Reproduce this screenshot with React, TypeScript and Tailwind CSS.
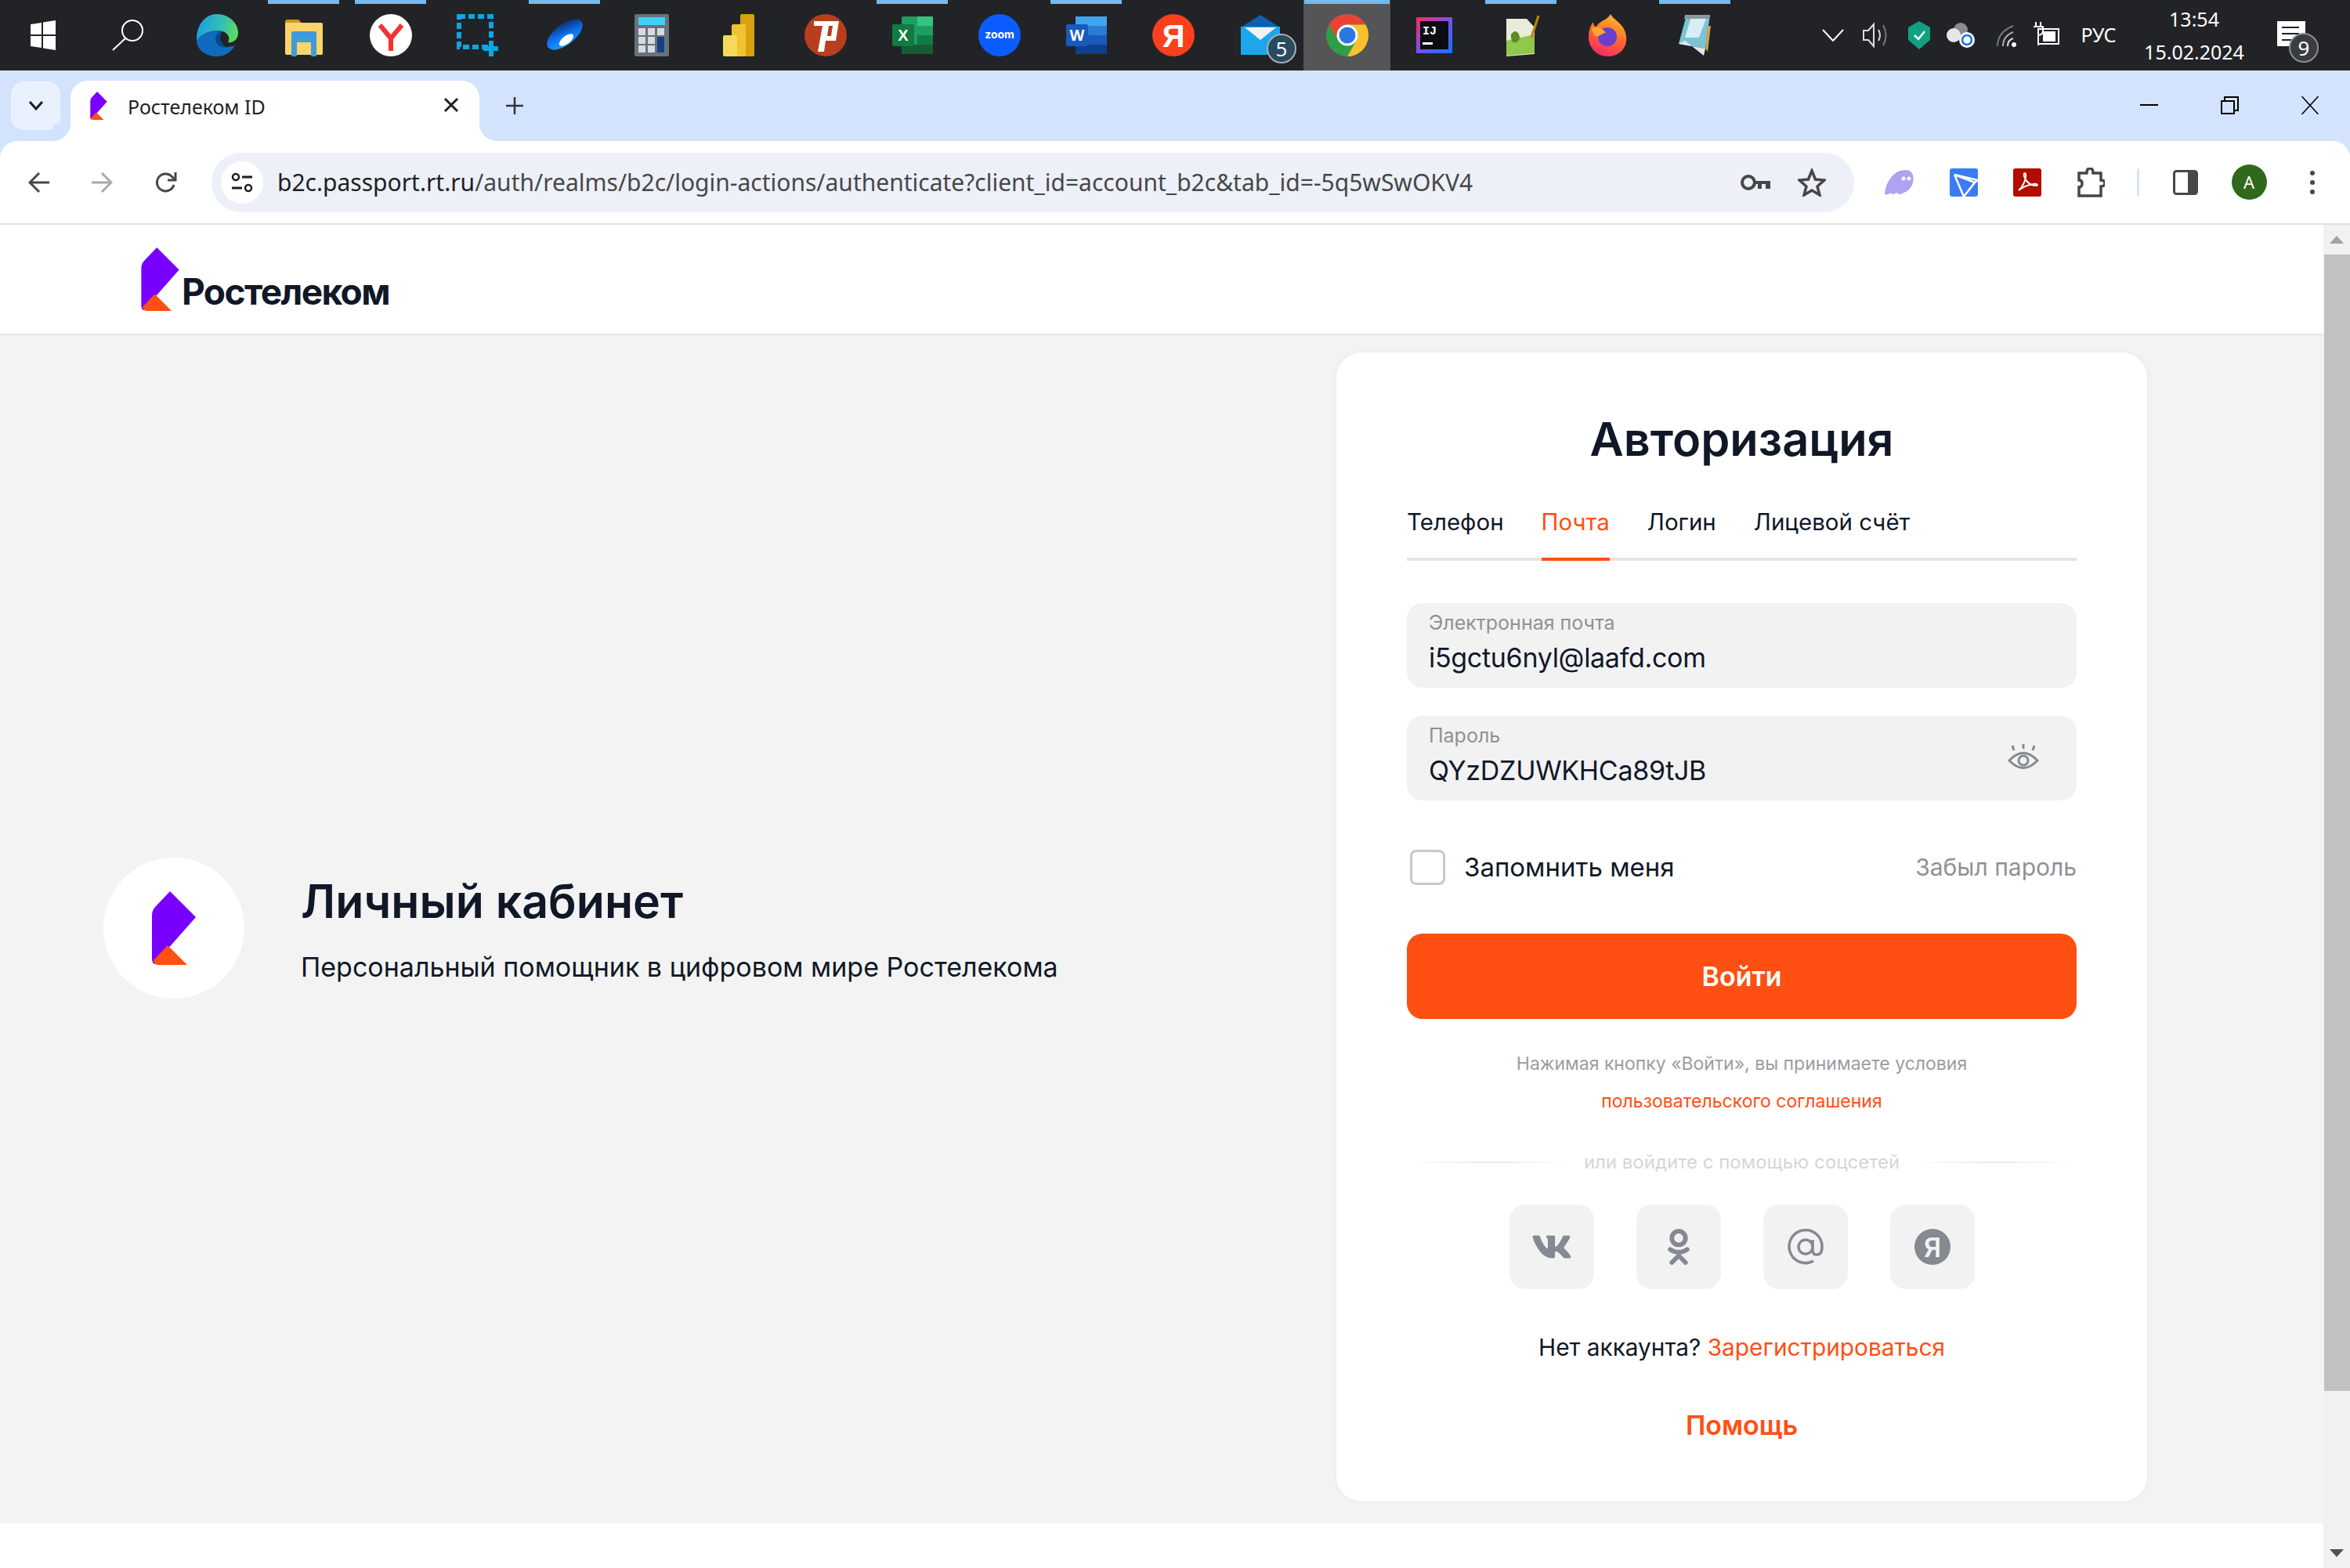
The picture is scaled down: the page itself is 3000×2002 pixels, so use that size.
import React from 'react';
import { FaVk, FaOdnoklassniki } from 'react-icons/fa';

const iconCls = 'w-[54px] h-[54px]';

function Logo({ className }: { className: string }) {
  return (
    <svg viewBox="0 0 56 94" className={className}>
      <path d="M23 0 L56 33 L3 93 Q0 91 0 86 V31 Q0 24 5 19 Z" fill="#7800ff" />
      <path d="M20 69 L45 94 H8 Q3 94 2 88 Z" fill="#ff4f12" />
    </svg>
  );
}

const Edge = () => (
  <svg viewBox="0 0 54 54" className={iconCls}>
    <defs>
      <linearGradient id="edgeA" x1="0" y1="0.4" x2="1" y2="0.6">
        <stop offset="0" stopColor="#1b9de2" />
        <stop offset="0.6" stopColor="#35c1b0" />
        <stop offset="1" stopColor="#62dc5a" />
      </linearGradient>
    </defs>
    <path d="M27 0 C43 0 54 12 54 24 C54 33 47 37 41 36 C44 32 42 24 34 22 C22 19 8 24 1 34 C0 14 12 0 27 0Z" fill="url(#edgeA)" />
    <path d="M1 34 C8 24 22 19 34 22 C28 22 24 28 26 35 C28 42 38 44 50 40 C44 50 36 54 27 54 C12 54 2 46 1 34Z" fill="#0f6cbd" />
    <path d="M34 22 C28 22 24 28 26 35 C27 40 33 43 40 43 C32 38 28 30 34 22Z" fill="#0a4a8c" />
  </svg>
);

const Explorer = () => (
  <svg viewBox="0 0 54 54" className={iconCls}>
    <path d="M3 10 Q3 7 6 7 H20 L25 12 V20 H3Z" fill="#d19b10" />
    <rect x="3" y="11" width="48" height="41" rx="2" fill="#fbd569" />
    <path d="M11 54 V24 Q11 22 13 22 H41 Q43 22 43 24 V54 H36 V36 H18 V54Z" fill="#3f9bdc" />
  </svg>
);

const YandexBrowser = () => (
  <svg viewBox="0 0 54 54" className={iconCls}>
    <circle cx="27" cy="27" r="27" fill="#fff" />
    <path d="M13 14 L27 31 L41 14 M27 31 V47" stroke="#f83030" strokeWidth="6" fill="none" />
  </svg>
);

const Snip = () => (
  <svg viewBox="0 0 54 54" className={iconCls}>
    <rect x="3" y="3" width="41" height="39" fill="none" stroke="#0ea5e9" strokeWidth="6" strokeDasharray="8 4" />
    <path d="M34 44 H53 M44 35 V54" stroke="#0ea5e9" strokeWidth="6" />
  </svg>
);

const Swoosh = () => (
  <svg viewBox="0 0 54 54" className={iconCls}>
    <defs>
      <linearGradient id="swooshA" x1="0.8" y1="0" x2="0.2" y2="1">
        <stop offset="0" stopColor="#0a2a66" />
        <stop offset="0.5" stopColor="#0d6ff0" />
        <stop offset="1" stopColor="#19a0ff" />
      </linearGradient>
    </defs>
    <ellipse cx="27" cy="26" rx="27" ry="13" fill="url(#swooshA)" transform="rotate(-38 27 26)" />
    <ellipse cx="29" cy="33" rx="11" ry="5" fill="#fff" transform="rotate(-38 29 33)" />
  </svg>
);

const Calc = () => (
  <svg viewBox="0 0 54 54" className={iconCls}>
    <rect x="5" y="0" width="44" height="54" rx="2" fill="#68727c" />
    <rect x="10" y="4" width="34" height="10" fill="#3fd0f5" />
    {[18, 29, 40].map(y =>
      [10, 22].map(x => <rect key={`${x}-${y}`} x={x} y={y} width="9" height="9" fill="#d5dbe0" />),
    )}
    <rect x="34" y="18" width="9" height="9" fill="#d5dbe0" />
    <rect x="34" y="29" width="9" height="20" fill="#16417f" />
  </svg>
);

const PowerBi = () => (
  <svg viewBox="0 0 54 54" className={iconCls}>
    <rect x="29" y="0" width="18" height="54" rx="2" fill="#d8a20f" />
    <rect x="18" y="13" width="18" height="41" rx="2" fill="#f2c230" />
    <rect x="7" y="27" width="18" height="27" rx="2" fill="#f5d95d" />
  </svg>
);

const Psiphon = () => (
  <svg viewBox="0 0 54 54" className={iconCls}>
    <circle cx="27" cy="27" r="27" fill="#b83e1f" />
    <path fillRule="evenodd" d="M12 9 H44 L40 34 H27 L25 48 H17 L23 15 H12Z M31 15 L29 28 H34 L36 15Z" fill="#fff" />
  </svg>
);

const Excel = () => (
  <svg viewBox="0 0 54 54" className={iconCls}>
    <rect x="13" y="3" width="40" height="48" rx="2" fill="#1f9e62" />
    <rect x="33" y="3" width="20" height="12" fill="#33c481" />
    <rect x="33" y="27" width="20" height="12" fill="#107c41" />
    <rect x="13" y="39" width="40" height="12" fill="#185c37" />
    <rect x="1" y="13" width="28" height="28" rx="2" fill="#107c41" />
    <text x="15" y="34" textAnchor="middle" fontSize="20" fontWeight="700" fill="#fff" fontFamily="Liberation Sans, sans-serif">X</text>
  </svg>
);

const Zoom = () => (
  <svg viewBox="0 0 54 54" className={iconCls}>
    <circle cx="27" cy="27" r="27" fill="#0b5cff" />
    <text x="27" y="31" textAnchor="middle" fontSize="14" fontWeight="700" fill="#fff" fontFamily="Inter, sans-serif">zoom</text>
  </svg>
);

const Word = () => (
  <svg viewBox="0 0 54 54" className={iconCls}>
    <rect x="13" y="3" width="40" height="48" rx="2" fill="#2b7cd3" />
    <rect x="13" y="3" width="40" height="12" fill="#41a5ee" />
    <rect x="13" y="27" width="40" height="12" fill="#185abd" />
    <rect x="13" y="39" width="40" height="12" fill="#103f91" />
    <rect x="1" y="13" width="28" height="28" rx="2" fill="#185abd" />
    <text x="15" y="34" textAnchor="middle" fontSize="20" fontWeight="700" fill="#fff" fontFamily="Liberation Sans, sans-serif">W</text>
  </svg>
);

const YandexRed = () => (
  <svg viewBox="0 0 54 54" className={iconCls}>
    <circle cx="27" cy="27" r="27" fill="#fc3f1d" />
    <text x="27" y="42" textAnchor="middle" fontSize="40" fontWeight="700" fill="#fff" fontFamily="Liberation Sans, sans-serif">Я</text>
  </svg>
);

const Mail = () => (
  <svg viewBox="0 0 54 54" className={iconCls}>
    <path d="M2 17 L27 1 L52 17 V30 H2Z" fill="#0f5fae" />
    <rect x="2" y="16" width="50" height="36" fill="#1ca7ec" />
    <path d="M7 17 H47 L27 33Z" fill="#f0f3f5" />
  </svg>
);

const Chrome = () => (
  <svg viewBox="0 0 54 54" className={iconCls}>
    <circle cx="27" cy="27" r="27" fill="#2f9e44" />
    <path d="M3.6 13.5 A27 27 0 0 1 50.4 13.5 H27 A13.5 13.5 0 0 0 15.3 33.75Z" fill="#ea4335" />
    <path d="M50.4 13.5 A27 27 0 0 1 27 54 L38.7 33.75 A13.5 13.5 0 0 0 27 13.5Z" fill="#fbc02d" />
    <circle cx="27" cy="27" r="13.5" fill="#fff" />
    <circle cx="27" cy="27" r="10.5" fill="#2b78e4" />
  </svg>
);

const Idea = () => (
  <svg viewBox="0 0 54 54" className={iconCls}>
    <defs>
      <linearGradient id="ideaA" x1="0" y1="0" x2="1" y2="1">
        <stop offset="0" stopColor="#fe2857" />
        <stop offset="0.5" stopColor="#7b4ff0" />
        <stop offset="1" stopColor="#087cfa" />
      </linearGradient>
    </defs>
    <rect x="4" y="4" width="46" height="46" fill="url(#ideaA)" />
    <rect x="9" y="9" width="36" height="36" fill="#0c0c14" />
    <text x="12" y="26" fontSize="15" fontWeight="700" fill="#fff" fontFamily="Liberation Mono, monospace">IJ</text>
    <rect x="12" y="36" width="13" height="3" fill="#fff" />
  </svg>
);

const NotepadPlus = () => (
  <svg viewBox="0 0 54 54" className={iconCls}>
    <path d="M8 6 H34 L44 17 V51 L8 54Z" fill="#e8ecd8" />
    <path d="M8 34 L44 26 V50 L8 53Z" fill="#8fc84a" />
    <path d="M14 26 q6 -8 10 0 q3 6 -3 10 q-8 2 -7 -10Z" fill="#5d8a22" />
    <path d="M40 30 L49 2" stroke="#b8860b" strokeWidth="3" />
  </svg>
);

const Firefox = () => (
  <svg viewBox="0 0 54 54" className={iconCls}>
    <defs>
      <linearGradient id="foxA" x1="0.7" y1="0" x2="0.3" y2="1">
        <stop offset="0" stopColor="#ffbd2e" />
        <stop offset="0.5" stopColor="#ff6a2b" />
        <stop offset="1" stopColor="#f5276c" />
      </linearGradient>
    </defs>
    <path d="M30 0 C34 8 48 12 50 28 C52 44 40 54 27 54 C12 54 1 42 2 28 C2 20 6 12 8 10 C8 14 10 16 12 16 C16 8 26 8 30 0Z" fill="url(#foxA)" />
    <circle cx="26" cy="29" r="12" fill="#6a3fd0" />
    <path d="M6 18 C14 14 22 20 24 24 C18 24 16 30 10 28 C8 26 7 22 6 18Z" fill="#ffa436" />
  </svg>
);

const Notepad = () => (
  <svg viewBox="0 0 54 54" className={iconCls}>
    <path d="M16 1 H46 L40 44 L6 38Z" fill="#7cc3d4" />
    <path d="M22 3 H42 L32 30 L14 30Z" fill="#d6eef4" />
    <path d="M14 1 H46 L45 6 H13Z" fill="#8b98a0" />
    <path d="M6 38 L14 34 L38 53 L40 44Z" fill="#e2e8ea" />
    <path d="M43 15 L47 15 L43 48 L40 44Z" fill="#c9a35a" />
  </svg>
);

const Start = () => (
  <svg viewBox="0 0 54 54" className={iconCls}>
    <path d="M11 13 L25 11 V26 H11Z M27 10.5 L43 8 V26 H27Z M11 28 H25 V43 L11 41Z M27 28 H43 V46 L27 43.5Z" fill="#fff" />
  </svg>
);

const Search = () => (
  <svg viewBox="0 0 54 54" className={iconCls}>
    <circle cx="30" cy="21" r="13" fill="none" stroke="#fff" strokeWidth="2" />
    <path d="M21 31 L5 46" stroke="#fff" strokeWidth="2" />
  </svg>
);

const apps: { icon: React.ReactNode; open?: boolean; active?: boolean; badge?: string }[] = [
  { icon: <Start /> },
  { icon: <Search /> },
  { icon: <Edge /> },
  { icon: <Explorer />, open: true },
  { icon: <YandexBrowser />, open: true },
  { icon: <Snip /> },
  { icon: <Swoosh />, open: true },
  { icon: <Calc /> },
  { icon: <PowerBi /> },
  { icon: <Psiphon /> },
  { icon: <Excel />, open: true },
  { icon: <Zoom /> },
  { icon: <Word />, open: true },
  { icon: <YandexRed /> },
  { icon: <Mail />, badge: '5' },
  { icon: <Chrome />, active: true },
  { icon: <Idea /> },
  { icon: <NotepadPlus />, open: true },
  { icon: <Firefox /> },
  { icon: <Notepad />, open: true },
];

function Taskbar() {
  return (
    <div className="flex h-[90px] bg-[#222326] font-['Noto_Sans',sans-serif] text-white">
      <div className="flex -ml-px">
        {apps.map((app, i) => (
          <div key={i} className={`relative flex w-[111px] items-center justify-center ${app.active ? 'bg-[#555558]' : ''}`}>
            {(app.open || app.active) && (
              <span className={`absolute top-0 h-[5px] bg-[#76b9ed] ${app.active ? 'inset-x-px' : 'w-[91px]'}`} />
            )}
            {app.icon}
            {app.badge && (
              <span className="absolute left-[64px] top-[43px] flex h-[38px] w-[38px] items-center justify-center rounded-full border-2 border-[#a8adb2] bg-[#2b4a5e] text-[26px] leading-none">
                {app.badge}
              </span>
            )}
          </div>
        ))}
      </div>
      <div className="ml-[96px] flex items-center">
        <div className="flex w-[50px] justify-center">
          <svg viewBox="0 0 28 16" className="h-[16px] w-[28px]"><path d="M1 1 L14 15 L27 1" fill="none" stroke="#fff" strokeWidth="2" /></svg>
        </div>
        <div className="flex w-[60px] justify-center">
          <svg viewBox="0 0 36 34" className="h-[34px] w-[36px]">
            <path d="M2 11 H8 L15 3 V31 L8 23 H2Z" fill="none" stroke="#ddd" strokeWidth="2" />
            <path d="M21 10 Q25 17 21 24" fill="none" stroke="#ddd" strokeWidth="2" />
            <path d="M27 4 Q34 17 27 30" fill="none" stroke="#777" strokeWidth="2" />
          </svg>
        </div>
        <div className="flex w-[50px] justify-center">
          <svg viewBox="0 0 28 36" className="h-[36px] w-[28px]">
            <path d="M14 0 L28 8 V24 L14 36 L0 24 V8Z" fill="#12a082" />
            <path d="M8 18 L13 23 L21 13" fill="none" stroke="#fff" strokeWidth="2.5" />
          </svg>
        </div>
        <div className="flex w-[58px] justify-center">
          <svg viewBox="0 0 38 32" className="h-[32px] w-[38px]">
            <circle cx="18" cy="9" r="9" fill="#8c8c8c" />
            <circle cx="9" cy="16" r="9" fill="#e6e6e6" />
            <circle cx="26" cy="22" r="10" fill="#fff" />
            <circle cx="26" cy="22" r="6" fill="none" stroke="#1a73e8" strokeWidth="2.5" />
          </svg>
        </div>
        <div className="flex w-[57px] justify-center">
          <svg viewBox="0 0 28 32" className="h-[32px] w-[28px]">
            <path d="M2 30 Q2 12 22 4" fill="none" stroke="#777" strokeWidth="2" />
            <path d="M9 30 Q9 17 22 12" fill="none" stroke="#aaa" strokeWidth="2" />
            <path d="M15 30 Q15 22 22 20" fill="none" stroke="#ddd" strokeWidth="2" />
            <circle cx="23" cy="28" r="3" fill="#fff" />
          </svg>
        </div>
        <div className="flex w-[46px] justify-center">
          <svg viewBox="0 0 36 34" className="h-[34px] w-[36px]">
            <path d="M4 0 V6 M10 0 V6 M1 6 H13 V12 Q13 16 7 17 V30" fill="none" stroke="#fff" strokeWidth="2" />
            <rect x="7" y="9" width="26" height="19" fill="none" stroke="#fff" strokeWidth="2" />
            <rect x="13" y="12" width="16" height="13" fill="#fff" />
          </svg>
        </div>
        <div className="w-[86px] text-center text-[25px]">РУС</div>
        <div className="flex w-[158px] flex-col items-center gap-[12px] text-[25px] leading-[30px]">
          <span>13:54</span>
          <span>15.02.2024</span>
        </div>
        <div className="flex w-[90px] justify-center">
          <div className="relative h-[32px] w-[36px] -translate-y-[2px] bg-white">
            <span className="absolute left-[6px] top-[7px] h-[2px] w-[22px] bg-[#222]" />
            <span className="absolute left-[6px] top-[15px] h-[2px] w-[22px] bg-[#222]" />
            <span className="absolute left-[6px] top-[23px] h-[2px] w-[22px] bg-[#222]" />
            <span className="absolute left-[15px] top-[15px] flex h-[38px] w-[38px] items-center justify-center rounded-full border-2 border-[#8a8e92] bg-[#3b3c3f] text-[26px] leading-none text-white">9</span>
          </div>
        </div>
      </div>
    </div>
  );
}

function TabStrip() {
  return (
    <div className="flex h-[90px] font-['Noto_Sans',sans-serif] text-[#1f1f1f]">
      <div className="ml-[14px] mt-[14px] flex h-[62px] w-[63px] items-center justify-center rounded-[16px] bg-[#e9f1fe]">
        <svg viewBox="0 0 20 14" className="h-[14px] w-[20px]"><path d="M2 2 L10 11 L18 2" fill="none" stroke="#1f1f1f" strokeWidth="3" /></svg>
      </div>
      <div className="relative ml-[13px] mt-[13px] flex h-[77px] w-[522px] items-start rounded-t-[22px] bg-white pl-[25px] pt-[14px]">
        <span className="absolute -left-[22px] bottom-0 h-[22px] w-[22px] bg-white">
          <span className="block h-full w-full rounded-br-[22px] bg-[#d3e3fd]" />
        </span>
        <span className="absolute -right-[22px] bottom-0 h-[22px] w-[22px] bg-white">
          <span className="block h-full w-full rounded-bl-[22px] bg-[#d3e3fd]" />
        </span>
        <Logo className="h-[36px] w-[22px]" />
        <span className="ml-[26px] text-[25px] leading-[38px]">Ростелеком ID</span>
        <svg viewBox="0 0 20 20" className="absolute left-[476px] top-[21px] h-[20px] w-[20px]"><path d="M2 2 L18 18 M18 2 L2 18" stroke="#1f1f1f" strokeWidth="3" /></svg>
      </div>
      <div className="ml-[20px] flex h-[90px] w-[50px] items-start justify-center pt-[33px]">
        <svg viewBox="0 0 24 24" className="h-[24px] w-[24px]"><path d="M12 1 V23 M1 12 H23" stroke="#333" strokeWidth="2.5" /></svg>
      </div>
      <div className="ml-auto flex">
        <div className="flex w-[103px] items-start justify-center pt-[43px]"><span className="h-[2px] w-[23px] bg-black" /></div>
        <div className="flex w-[103px] items-start justify-center pt-[33px]">
          <svg viewBox="0 0 23 23" className="h-[23px] w-[23px]"><path d="M1 6 H17 V22 H1Z M5 6 V1 H22 V18 H17" fill="none" stroke="#000" strokeWidth="2" /></svg>
        </div>
        <div className="flex w-[102px] items-start justify-center pt-[33px]">
          <svg viewBox="0 0 24 24" className="h-[23px] w-[24px]"><path d="M1 0 L23 24 M23 0 L1 24" stroke="#000" strokeWidth="1.6" /></svg>
        </div>
      </div>
    </div>
  );
}

function Toolbar() {
  return (
    <div className="flex h-[105px] items-center rounded-t-[22px] bg-white font-['Noto_Sans',sans-serif]">
      <div className="ml-[10px] flex w-[80px] justify-center">
        <svg viewBox="0 0 28 28" className="h-[28px] w-[28px]"><path d="M14 2 L2 14 L14 26 M2 14 H27" fill="none" stroke="#474747" strokeWidth="3" /></svg>
      </div>
      <div className="flex w-[80px] justify-center">
        <svg viewBox="0 0 28 28" className="h-[28px] w-[28px]"><path d="M14 2 L26 14 L14 26 M26 14 H1" fill="none" stroke="#aaa" strokeWidth="3" /></svg>
      </div>
      <div className="ml-[2px] flex w-[80px] justify-center">
        <svg viewBox="0 0 30 30" className="h-[30px] w-[30px]">
          <path d="M25 18 A11 11 0 1 1 22 7 L26 11" fill="none" stroke="#474747" strokeWidth="3" />
          <path d="M27 2 V12 H17" fill="none" stroke="#474747" strokeWidth="3" />
        </svg>
      </div>
      <div className="ml-[18px] flex h-[76px] w-[2097px] items-center rounded-full bg-[#edf0f9] pl-[12px] pr-[29px]">
        <div className="flex h-[54px] w-[54px] items-center justify-center rounded-full bg-white">
          <svg viewBox="0 0 28 26" className="h-[26px] w-[28px]">
            <circle cx="6" cy="6" r="4" fill="none" stroke="#1f1f1f" strokeWidth="2.5" />
            <path d="M14 6 H27 M1 20 H14" stroke="#1f1f1f" strokeWidth="3" />
            <circle cx="22" cy="20" r="4" fill="none" stroke="#1f1f1f" strokeWidth="2.5" />
          </svg>
        </div>
        <span className="ml-[18px] flex-1 text-[30px] text-[#1f1f1f]">
          b2c.passport.rt.ru<span className="text-[#474747]">/auth/realms/b2c/login-actions/authenticate?client_id=account_b2c&amp;tab_id=-5q5wSwOKV4</span>
        </span>
        <div className="mr-[22px] flex w-[50px] justify-center">
          <svg viewBox="0 0 40 24" className="h-[24px] w-[40px]">
            <circle cx="11" cy="12" r="8" fill="none" stroke="#474747" strokeWidth="4" />
            <path d="M19 10 H39 V20 H33 V14 H28 V20 H23 V14 H19Z" fill="#474747" />
          </svg>
        </div>
        <div className="flex w-[50px] justify-center">
          <svg viewBox="0 0 36 36" className="h-[36px] w-[36px]"><path d="M18 3 L22.5 14 L34 15 L25 23 L28 34 L18 28 L8 34 L11 23 L2 15 L13.5 14Z" fill="none" stroke="#474747" strokeWidth="3.5" /></svg>
        </div>
      </div>
      <div className="ml-[17px] flex w-[82px] justify-center">
        <svg viewBox="0 0 38 32" className="h-[32px] w-[38px]">
          <path d="M0 30 C2 14 12 0 26 0 C36 0 38 8 36 16 C34 24 28 28 24 29 C22 32 17 31 15 29 C12 32 8 31 7 29 C5 32 1 32 0 30Z" fill="#ada3f2" />
          <circle cx="24" cy="11" r="2.5" fill="#fff" />
          <circle cx="31" cy="11" r="2.5" fill="#fff" />
        </svg>
      </div>
      <div className="flex w-[82px] justify-center">
        <svg viewBox="0 0 36 36" className="h-[36px] w-[36px]">
          <rect width="36" height="36" rx="3" fill="#3b7cf4" />
          <path d="M6 8 L36 15 M6 8 L18 36 L32 18 L36 15 M6 8 L32 18" fill="none" stroke="#fff" strokeWidth="2.5" />
        </svg>
      </div>
      <div className="flex w-[80px] justify-center">
        <svg viewBox="0 0 36 36" className="h-[36px] w-[36px]">
          <rect width="36" height="36" rx="3" fill="#b30b00" />
          <path d="M7 28 C12 24 17 14 16 7 C15 5 13 6 14 10 C16 17 22 22 30 22 C32 21 30 19 26 20 C20 21 12 24 7 28Z" fill="none" stroke="#fff" strokeWidth="2" />
        </svg>
      </div>
      <div className="flex w-[82px] justify-center">
        <svg viewBox="0 0 36 38" className="h-[38px] w-[36px]">
          <path d="M3 7 H13 Q13 1 17 1 Q21 1 21 7 H31 V16 Q36 16 36 20 Q36 24 31 24 V36 H3 V25 Q7 25 7 20 Q7 16 3 16Z" fill="none" stroke="#474747" strokeWidth="3.5" />
        </svg>
      </div>
      <div className="flex w-[38px] justify-center"><span className="h-[36px] w-[3px] rounded-full bg-[#d3e3fd]" /></div>
      <div className="flex w-[84px] justify-center">
        <svg viewBox="0 0 32 32" className="h-[32px] w-[32px]">
          <rect x="1.5" y="1.5" width="29" height="29" rx="3" fill="#fff" stroke="#474747" strokeWidth="3" />
          <path d="M19 2 H28 Q30 2 30 4 V28 Q30 30 28 30 H19Z" fill="#474747" />
        </svg>
      </div>
      <div className="flex w-[78px] justify-center">
        <span className="flex h-[45px] w-[45px] items-center justify-center rounded-full bg-[#31691c] text-[22px] text-white">A</span>
      </div>
      <div className="flex w-[84px] flex-col items-center gap-[6px]">
        <span className="h-[6px] w-[6px] rounded-full bg-[#474747]" />
        <span className="h-[6px] w-[6px] rounded-full bg-[#474747]" />
        <span className="h-[6px] w-[6px] rounded-full bg-[#474747]" />
      </div>
    </div>
  );
}

function Field({ label, value, children }: { label: string; value: string; children?: React.ReactNode }) {
  return (
    <div className="relative flex h-[108px] flex-col rounded-[20px] bg-[#f2f2f3] px-[28px] pt-[8px]">
      <span className="text-[25px] leading-[34px] text-[#8e9197]">{label}</span>
      <span className="mt-[6px] text-[34px] leading-[44px] tracking-[-0.3px] text-[#101828]">{value}</span>
      {children}
    </div>
  );
}

function LoginCard() {
  return (
    <div className="ml-[1706px] h-[1467px] w-[1035px] rounded-[32px] bg-white px-[90px] pt-[70px] shadow-[0_0_6px_rgba(16,24,40,0.05)]">
      <h1 className="text-center text-[59.5px] font-semibold leading-[80px] text-[#101828]">Авторизация</h1>
      <div className="mt-[20px] flex gap-[48px] border-b-4 border-[#e3e4e6] text-[29.5px] leading-[40px] text-[#101828]">
        <span className="py-[26px]">Телефон</span>
        <span className="-mb-[4px] border-b-4 border-[#ff4f12] py-[26px] text-[#ff4f12]">Почта</span>
        <span className="py-[26px]">Логин</span>
        <span className="py-[26px]">Лицевой счёт</span>
      </div>
      <div className="mt-[54px]">
        <Field label="Электронная почта" value="i5gctu6nyl@laafd.com" />
      </div>
      <div className="mt-[36px]">
        <Field label="Пароль" value="QYzDZUWKHCa89tJB">
          <svg viewBox="0 0 40 34" className="absolute right-[48px] top-[35px] h-[34px] w-[40px]" fill="none" stroke="#858991" strokeWidth="3">
            <path d="M2 22 Q20 3 38 22 Q20 41 2 22Z" />
            <circle cx="20" cy="22" r="6" />
            <path d="M20 1 V7 M6 3 L8 9 M34 3 L32 9" />
          </svg>
        </Field>
      </div>
      <div className="mt-[63px] flex h-[45px] items-center pl-[4px] text-[33px]">
        <span className="h-[45px] w-[45px] rounded-[8px] border-[3px] border-[#c6c8cc] bg-white" />
        <span className="ml-[24px] text-[#101828]">Запомнить меня</span>
        <span className="ml-auto text-[30px] text-[#8e9197]">Забыл пароль</span>
      </div>
      <button className="mt-[62px] h-[109px] w-full rounded-[20px] bg-[#ff4f12] text-[34px] font-semibold text-white">Войти</button>
      <p className="mt-[33px] text-center text-[23px] leading-[48px] text-[#9a9da3]">Нажимая кнопку «Войти», вы принимаете условия</p>
      <p className="text-center text-[23px] leading-[48px] text-[#ff4f12]">пользовательского соглашения</p>
      <div className="mt-[34px] flex h-[40px] items-center gap-[16px] text-[24px] text-[#d4d6d9]">
        <span className="h-[2px] flex-1 bg-gradient-to-r from-white via-[#e8e9eb] to-white" />
        <span>или войдите с помощью соцсетей</span>
        <span className="h-[2px] flex-1 bg-gradient-to-r from-white via-[#e8e9eb] to-white" />
      </div>
      <div className="mt-[34px] flex justify-center gap-[54px] text-[#858991]">
        <div className="flex h-[108px] w-[108px] items-center justify-center rounded-[20px] bg-[#f2f2f3]"><FaVk className="h-[50px] w-[52px]" /></div>
        <div className="flex h-[108px] w-[108px] items-center justify-center rounded-[20px] bg-[#f2f2f3]"><FaOdnoklassniki className="h-[46px] w-[46px]" /></div>
        <div className="flex h-[108px] w-[108px] items-center justify-center rounded-[20px] bg-[#f2f2f3]">
          <svg viewBox="0 0 46 46" className="h-[46px] w-[46px]" fill="none" stroke="#858991" strokeWidth="3.5">
            <circle cx="23" cy="23" r="9" />
            <path d="M32 14 V27 Q32 33 37 33 Q44 33 44 23 A21 21 0 1 0 33 41" />
          </svg>
        </div>
        <div className="flex h-[108px] w-[108px] items-center justify-center rounded-[20px] bg-[#f2f2f3]">
          <svg viewBox="0 0 46 46" className="h-[46px] w-[46px]">
            <circle cx="23" cy="23" r="23" fill="#858991" />
            <text x="23" y="36" textAnchor="middle" fontSize="34" fontWeight="600" fill="#f2f2f3" fontFamily="Inter, sans-serif">Я</text>
          </svg>
        </div>
      </div>
      <p className="mt-[52px] text-center text-[29.8px] leading-[44px] text-[#101828]">
        Нет аккаунта? <span className="text-[#ff4f12]">Зарегистрироваться</span>
      </p>
      <p className="mt-[56px] text-center text-[34px] font-semibold leading-[44px] text-[#ff4f12]">Помощь</p>
    </div>
  );
}

function Page() {
  return (
    <div className="flex flex-1 flex-col font-[Inter,sans-serif]">
      <header className="flex h-[141px] items-start border-b-2 border-[#e6e6e6] bg-white pl-[180px] pt-[29px]">
        <Logo className="h-[81px] w-[49px]" />
        <span className="ml-[3px] mt-[26px] text-[46px] font-bold leading-[60px] tracking-[-1.6px] text-[#101828]">Ростелеком</span>
      </header>
      <main className="relative flex h-[1517px] bg-[#f3f3f3] pt-[22px]">
        <div className="absolute left-[132px] top-0 flex h-full items-center pb-[4px]">
          <div className="flex h-[180px] w-[180px] items-center justify-center rounded-full bg-white">
            <Logo className="h-[94px] w-[56px]" />
          </div>
          <div className="ml-[72px]">
            <h2 className="text-[59px] font-semibold leading-[76px] text-[#101828]">Личный кабинет</h2>
            <p className="mt-[24px] text-[34px] leading-[44px] text-[#101828]">Персональный помощник в цифровом мире Ростелекома</p>
          </div>
        </div>
        <LoginCard />
      </main>
      <div className="flex-1 bg-white" />
    </div>
  );
}

function Scrollbar() {
  return (
    <div className="flex w-[34px] flex-col bg-[#f1f1f1]">
      <div className="flex h-[38px] items-center justify-center">
        <span className="h-0 w-0 border-x-[9px] border-b-[10px] border-x-transparent border-b-[#a3a3a3]" />
      </div>
      <div className="ml-px h-[1451px] bg-[#c1c1c1]" />
      <div className="mt-auto flex h-[38px] items-center justify-center">
        <span className="h-0 w-0 border-x-[9px] border-t-[10px] border-x-transparent border-t-[#505050]" />
      </div>
    </div>
  );
}

export default function App() {
  return (
    <div className="flex h-[2002px] w-[3000px] flex-col overflow-hidden bg-white">
      <Taskbar />
      <div className="bg-[#d3e3fd]">
        <TabStrip />
        <Toolbar />
      </div>
      <div className="h-[2px] bg-[#e0e0e0]" />
      <div className="flex flex-1">
        <Page />
        <Scrollbar />
      </div>
    </div>
  );
}
